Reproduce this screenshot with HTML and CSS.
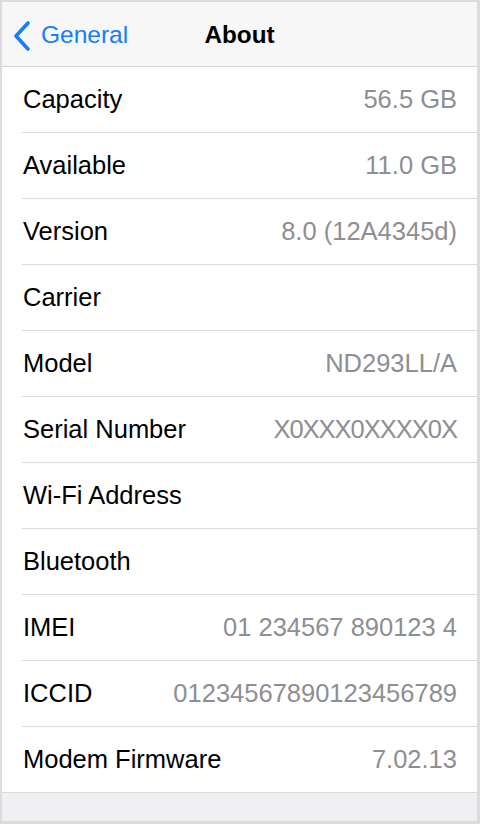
FILE: index.html
```html
<!DOCTYPE html>
<html>
<head>
<meta charset="utf-8">
<link rel="stylesheet" href="styles.css">
</head>
<body>
<div class="frame">
  <div class="nav">
    <div class="back">
      <svg class="chev" width="22" height="34" viewBox="0 0 22 34"><polyline points="17,4 5,17 17,30" fill="none" stroke="#147efb" stroke-width="3.6" stroke-linecap="round" stroke-linejoin="round"/></svg>
      <span class="back-text">General</span>
    </div>
    <div class="title">About</div>
    <div></div>
  </div>
  <div class="list">
    <div class="row"><div class="inner"><span class="label">Capacity</span><span class="value">56.5 GB</span></div></div>
    <div class="row"><div class="inner"><span class="label">Available</span><span class="value">11.0 GB</span></div></div>
    <div class="row"><div class="inner"><span class="label">Version</span><span class="value">8.0 (12A4345d)</span></div></div>
    <div class="row"><div class="inner"><span class="label">Carrier</span><span class="value"></span></div></div>
    <div class="row"><div class="inner"><span class="label">Model</span><span class="value">ND293LL/A</span></div></div>
    <div class="row"><div class="inner"><span class="label">Serial Number</span><span class="value serial">X0XXX0XXXX0X</span></div></div>
    <div class="row"><div class="inner"><span class="label">Wi-Fi Address</span><span class="value"></span></div></div>
    <div class="row"><div class="inner"><span class="label">Bluetooth</span><span class="value"></span></div></div>
    <div class="row"><div class="inner"><span class="label">IMEI</span><span class="value">01 234567 890123 4</span></div></div>
    <div class="row"><div class="inner"><span class="label">ICCID</span><span class="value">01234567890123456789</span></div></div>
    <div class="row"><div class="inner"><span class="label">Modem Firmware</span><span class="value">7.02.13</span></div></div>
  </div>
  <div class="footer"></div>
</div>
</body>
</html>
```
FILE: styles.css
```css
* { box-sizing: border-box; }
html, body { margin: 0; padding: 0; background: #dcdcdc; }
body { font-family: "Liberation Sans", Arial, sans-serif; }
.frame {
  width: 480px;
  height: 824px;
  border-style: solid;
  border-color: #dcdcdc;
  border-width: 2px 3px 3px 2px;
  background: #efeff4;
  display: flex;
  flex-direction: column;
  overflow: hidden;
}
.nav {
  height: 65px;
  flex: none;
  background: #f7f7f7;
  border-bottom: 1px solid #d6d6d6;
  display: grid;
  grid-template-columns: 1fr auto 1fr;
  align-items: center;
  padding-top: 2px;
}
.back {
  display: flex;
  align-items: center;
  padding-left: 9px;
  color: #147efb;
  font-size: 24.5px;
}
.chev { display: block; margin-right: 8px; margin-top: 1px; }
.title {
  font-weight: bold;
  font-size: 24.3px;
  color: #000;
}
.list {
  background: #fff;
  border-bottom: 1px solid #dadada;
  flex: none;
}
.row { padding-left: 20px; }
.inner {
  height: 66px;
  border-bottom: 1px solid #dcdcdc;
  display: flex;
  align-items: center;
  justify-content: space-between;
  padding-right: 20px;
  padding-left: 1px;
  font-size: 25.5px;
}
.row:last-child .inner { border-bottom: none; height: 65px; }
.label { color: #000; }
.value { color: #8e8e93; }
.serial { letter-spacing: -1px; }
.footer { flex: 1; background: #efeff4; }
```
